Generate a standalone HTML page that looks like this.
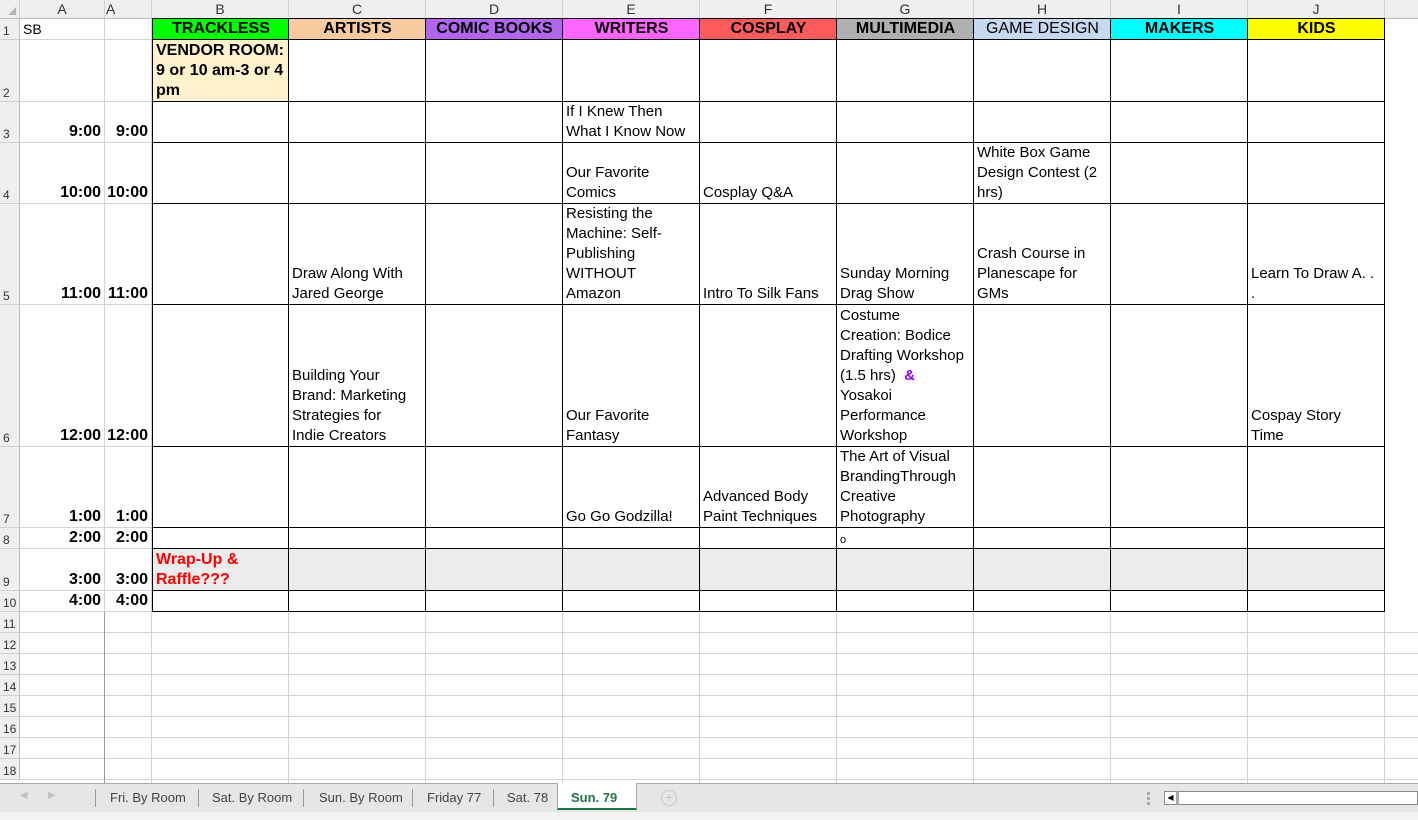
<!DOCTYPE html>
<html><head><meta charset="utf-8"><style>
*{margin:0;padding:0}
body{width:1418px;height:820px;position:relative;overflow:hidden;background:#fff;font-family:"Liberation Sans",Arial,sans-serif;font-size:15px;color:#000}
div{position:absolute;box-sizing:border-box}
.h{top:0;height:19px;background:#efefef;border-right:1px solid #d0d0d0;border-bottom:1px solid #bdbdbd;text-align:center;font-size:14px;line-height:19px;color:#333}
.r{left:0;width:20px;background:#efefef;border-bottom:1px solid #d0d0d0;border-right:1px solid #bdbdbd;font-size:12px;color:#333;display:flex;align-items:flex-end;padding-left:3px;padding-bottom:1px}
.g{border-right:1px solid #d4d4d4;border-bottom:1px solid #d4d4d4}
.c{border-right:1px solid #000;border-bottom:1px solid #000;display:flex;align-items:flex-end;padding:0 2px 0 3px;line-height:20px;overflow:hidden}
.c>span{display:block}
.t{border-right:1px solid #d4d4d4;border-bottom:1px solid #d4d4d4;display:flex;align-items:flex-end;justify-content:flex-end;font-weight:bold;font-size:16px;line-height:20px;padding-right:3px}
.hd{justify-content:center;font-weight:bold;font-size:16px;align-items:center}
.b{font-weight:bold;font-size:16px}
</style></head><body>
<div class="h" style="left:0;width:20px;"><span style="position:absolute;right:3px;bottom:3px;width:0;height:0;border-left:8px solid transparent;border-bottom:8px solid #b5b5b5"></span></div>
<div class="h" style="left:20px;width:85px">A</div>
<div class="h" style="left:105px;width:47px;text-align:left;padding-left:1px">A</div>
<div class="h" style="left:152px;width:137px">B</div>
<div class="h" style="left:289px;width:137px">C</div>
<div class="h" style="left:426px;width:137px">D</div>
<div class="h" style="left:563px;width:137px">E</div>
<div class="h" style="left:700px;width:137px">F</div>
<div class="h" style="left:837px;width:137px">G</div>
<div class="h" style="left:974px;width:137px">H</div>
<div class="h" style="left:1111px;width:137px">I</div>
<div class="h" style="left:1248px;width:137px">J</div>
<div class="h" style="left:1385px;width:33px;border-right:none"></div>

<div class="r" style="top:19px;height:21px">1</div>
<div class="r" style="top:40px;height:62px">2</div>
<div class="r" style="top:102px;height:41px">3</div>
<div class="r" style="top:143px;height:61px">4</div>
<div class="r" style="top:204px;height:101px">5</div>
<div class="r" style="top:305px;height:142px">6</div>
<div class="r" style="top:447px;height:81px">7</div>
<div class="r" style="top:528px;height:21px">8</div>
<div class="r" style="top:549px;height:42px">9</div>
<div class="r" style="top:591px;height:21px">10</div>
<div class="r" style="top:612px;height:21px">11</div>
<div class="r" style="top:633px;height:21px">12</div>
<div class="r" style="top:654px;height:21px">13</div>
<div class="r" style="top:675px;height:21px">14</div>
<div class="r" style="top:696px;height:21px">15</div>
<div class="r" style="top:717px;height:21px">16</div>
<div class="r" style="top:738px;height:21px">17</div>
<div class="r" style="top:759px;height:21px">18</div>

<div style="left:20px;top:612px;width:1398px;height:171px;background:repeating-linear-gradient(to bottom,transparent 0,transparent 20px,#d4d4d4 20px,#d4d4d4 21px)"></div>
<div style="left:104px;top:19px;width:1px;height:764px;background:#9a9a9a"></div>
<div style="left:151px;top:19px;width:1px;height:764px;background:#d4d4d4"></div>
<div style="left:288px;top:612px;width:1px;height:171px;background:#d4d4d4"></div>
<div style="left:425px;top:612px;width:1px;height:171px;background:#d4d4d4"></div>
<div style="left:562px;top:612px;width:1px;height:171px;background:#d4d4d4"></div>
<div style="left:699px;top:612px;width:1px;height:171px;background:#d4d4d4"></div>
<div style="left:836px;top:612px;width:1px;height:171px;background:#d4d4d4"></div>
<div style="left:973px;top:612px;width:1px;height:171px;background:#d4d4d4"></div>
<div style="left:1110px;top:612px;width:1px;height:171px;background:#d4d4d4"></div>
<div style="left:1247px;top:612px;width:1px;height:171px;background:#d4d4d4"></div>
<div style="left:1384px;top:19px;width:1px;height:764px;background:#d4d4d4"></div>

<div class="g" style="left:20px;top:19px;width:85px;height:21px;padding-left:3px;line-height:21px;font-size:14px">SB</div>
<div class="g" style="left:105px;top:19px;width:47px;height:21px"></div>
<div class="t" style="left:20px;top:40px;width:85px;height:62px"></div><div class="t" style="left:105px;top:40px;width:47px;height:62px"></div>
<div class="t" style="left:20px;top:102px;width:85px;height:41px">9:00</div><div class="t" style="left:105px;top:102px;width:47px;height:41px">9:00</div>
<div class="t" style="left:20px;top:143px;width:85px;height:61px">10:00</div><div class="t" style="left:105px;top:143px;width:47px;height:61px">10:00</div>
<div class="t" style="left:20px;top:204px;width:85px;height:101px">11:00</div><div class="t" style="left:105px;top:204px;width:47px;height:101px">11:00</div>
<div class="t" style="left:20px;top:305px;width:85px;height:142px">12:00</div><div class="t" style="left:105px;top:305px;width:47px;height:142px">12:00</div>
<div class="t" style="left:20px;top:447px;width:85px;height:81px">1:00</div><div class="t" style="left:105px;top:447px;width:47px;height:81px">1:00</div>
<div class="t" style="left:20px;top:528px;width:85px;height:21px">2:00</div><div class="t" style="left:105px;top:528px;width:47px;height:21px">2:00</div>
<div class="t" style="left:20px;top:549px;width:85px;height:42px">3:00</div><div class="t" style="left:105px;top:549px;width:47px;height:42px">3:00</div>
<div class="t" style="left:20px;top:591px;width:85px;height:21px">4:00</div><div class="t" style="left:105px;top:591px;width:47px;height:21px">4:00</div>

<div style="left:152px;top:18px;width:1233px;height:1px;background:#000"></div>
<div style="left:152px;top:18px;width:1px;height:594px;background:#000"></div>

<div class="c hd" style="left:153px;top:19px;width:136px;height:21px;background:#00ff00">TRACKLESS</div>
<div class="c hd" style="left:289px;top:19px;width:137px;height:21px;background:#f8cba0">ARTISTS</div>
<div class="c hd" style="left:426px;top:19px;width:137px;height:21px;background:#b166f2">COMIC BOOKS</div>
<div class="c hd" style="left:563px;top:19px;width:137px;height:21px;background:#ff66ff">WRITERS</div>
<div class="c hd" style="left:700px;top:19px;width:137px;height:21px;background:#ff5b5b">COSPLAY</div>
<div class="c hd" style="left:837px;top:19px;width:137px;height:21px;background:#b0b0b0">MULTIMEDIA</div>
<div class="c hd" style="left:974px;top:19px;width:137px;height:21px;background:#c6d9f1;font-weight:normal">GAME DESIGN</div>
<div class="c hd" style="left:1111px;top:19px;width:137px;height:21px;background:#00ffff">MAKERS</div>
<div class="c hd" style="left:1248px;top:19px;width:137px;height:21px;background:#ffff00">KIDS</div>

<div class="c b" style="left:153px;top:40px;width:136px;height:62px;background:#fff2cc;align-items:flex-start;padding-top:1px"><span>VENDOR ROOM:<br>9 or 10 am-3 or 4<br>pm</span></div>
<div class="c" style="left:289px;top:40px;width:137px;height:62px"></div>
<div class="c" style="left:426px;top:40px;width:137px;height:62px"></div>
<div class="c" style="left:563px;top:40px;width:137px;height:62px"></div>
<div class="c" style="left:700px;top:40px;width:137px;height:62px"></div>
<div class="c" style="left:837px;top:40px;width:137px;height:62px"></div>
<div class="c" style="left:974px;top:40px;width:137px;height:62px"></div>
<div class="c" style="left:1111px;top:40px;width:137px;height:62px"></div>
<div class="c" style="left:1248px;top:40px;width:137px;height:62px"></div>

<div class="c" style="left:153px;top:102px;width:136px;height:41px"></div>
<div class="c" style="left:289px;top:102px;width:137px;height:41px"></div>
<div class="c" style="left:426px;top:102px;width:137px;height:41px"></div>
<div class="c" style="left:563px;top:102px;width:137px;height:41px"><span>If I Knew Then<br>What I Know Now</span></div>
<div class="c" style="left:700px;top:102px;width:137px;height:41px"></div>
<div class="c" style="left:837px;top:102px;width:137px;height:41px"></div>
<div class="c" style="left:974px;top:102px;width:137px;height:41px"></div>
<div class="c" style="left:1111px;top:102px;width:137px;height:41px"></div>
<div class="c" style="left:1248px;top:102px;width:137px;height:41px"></div>

<div class="c" style="left:153px;top:143px;width:136px;height:61px"></div>
<div class="c" style="left:289px;top:143px;width:137px;height:61px"></div>
<div class="c" style="left:426px;top:143px;width:137px;height:61px"></div>
<div class="c" style="left:563px;top:143px;width:137px;height:61px"><span>Our Favorite<br>Comics</span></div>
<div class="c" style="left:700px;top:143px;width:137px;height:61px"><span>Cosplay Q&amp;A</span></div>
<div class="c" style="left:837px;top:143px;width:137px;height:61px"></div>
<div class="c" style="left:974px;top:143px;width:137px;height:61px"><span>White Box Game<br>Design Contest (2<br>hrs)</span></div>
<div class="c" style="left:1111px;top:143px;width:137px;height:61px"></div>
<div class="c" style="left:1248px;top:143px;width:137px;height:61px"></div>

<div class="c" style="left:153px;top:204px;width:136px;height:101px"></div>
<div class="c" style="left:289px;top:204px;width:137px;height:101px"><span>Draw Along With<br>Jared George</span></div>
<div class="c" style="left:426px;top:204px;width:137px;height:101px"></div>
<div class="c" style="left:563px;top:204px;width:137px;height:101px"><span>Resisting the<br>Machine: Self-<br>Publishing<br>WITHOUT<br>Amazon</span></div>
<div class="c" style="left:700px;top:204px;width:137px;height:101px"><span>Intro To Silk Fans</span></div>
<div class="c" style="left:837px;top:204px;width:137px;height:101px"><span>Sunday Morning<br>Drag Show</span></div>
<div class="c" style="left:974px;top:204px;width:137px;height:101px"><span>Crash Course in<br>Planescape for<br>GMs</span></div>
<div class="c" style="left:1111px;top:204px;width:137px;height:101px"></div>
<div class="c" style="left:1248px;top:204px;width:137px;height:101px"><span>Learn To Draw A. .<br>.</span></div>

<div class="c" style="left:153px;top:305px;width:136px;height:142px"></div>
<div class="c" style="left:289px;top:305px;width:137px;height:142px"><span>Building Your<br>Brand: Marketing<br>Strategies for<br>Indie Creators</span></div>
<div class="c" style="left:426px;top:305px;width:137px;height:142px"></div>
<div class="c" style="left:563px;top:305px;width:137px;height:142px"><span>Our Favorite<br>Fantasy</span></div>
<div class="c" style="left:700px;top:305px;width:137px;height:142px"></div>
<div class="c" style="left:837px;top:305px;width:137px;height:142px;white-space:nowrap"><span>Costume<br>Creation: Bodice<br>Drafting Workshop<br>(1.5 hrs)&nbsp; <b style="color:#9900ff">&amp;</b><br>Yosakoi<br>Performance<br>Workshop</span></div>
<div class="c" style="left:974px;top:305px;width:137px;height:142px"></div>
<div class="c" style="left:1111px;top:305px;width:137px;height:142px"></div>
<div class="c" style="left:1248px;top:305px;width:137px;height:142px"><span>Cospay Story<br>Time</span></div>

<div class="c" style="left:153px;top:447px;width:136px;height:81px"></div>
<div class="c" style="left:289px;top:447px;width:137px;height:81px"></div>
<div class="c" style="left:426px;top:447px;width:137px;height:81px"></div>
<div class="c" style="left:563px;top:447px;width:137px;height:81px"><span>Go Go Godzilla!</span></div>
<div class="c" style="left:700px;top:447px;width:137px;height:81px"><span>Advanced Body<br>Paint Techniques</span></div>
<div class="c" style="left:837px;top:447px;width:137px;height:81px"><span>The Art of Visual<br>BrandingThrough<br>Creative<br>Photography</span></div>
<div class="c" style="left:974px;top:447px;width:137px;height:81px"></div>
<div class="c" style="left:1111px;top:447px;width:137px;height:81px"></div>
<div class="c" style="left:1248px;top:447px;width:137px;height:81px"></div>

<div class="c" style="left:153px;top:528px;width:136px;height:21px"></div>
<div class="c" style="left:289px;top:528px;width:137px;height:21px"></div>
<div class="c" style="left:426px;top:528px;width:137px;height:21px"></div>
<div class="c" style="left:563px;top:528px;width:137px;height:21px"></div>
<div class="c" style="left:700px;top:528px;width:137px;height:21px"></div>
<div class="c" style="left:837px;top:528px;width:137px;height:21px;font-size:11px;line-height:16px"><span>o</span></div>
<div class="c" style="left:974px;top:528px;width:137px;height:21px"></div>
<div class="c" style="left:1111px;top:528px;width:137px;height:21px"></div>
<div class="c" style="left:1248px;top:528px;width:137px;height:21px"></div>

<div class="c b" style="left:153px;top:549px;width:136px;height:42px;background:#ededed;color:#ff0000"><span>Wrap-Up &amp;<br>Raffle???</span></div>
<div class="c" style="left:289px;top:549px;width:137px;height:42px;background:#ededed"></div>
<div class="c" style="left:426px;top:549px;width:137px;height:42px;background:#ededed"></div>
<div class="c" style="left:563px;top:549px;width:137px;height:42px;background:#ededed"></div>
<div class="c" style="left:700px;top:549px;width:137px;height:42px;background:#ededed"></div>
<div class="c" style="left:837px;top:549px;width:137px;height:42px;background:#ededed"></div>
<div class="c" style="left:974px;top:549px;width:137px;height:42px;background:#ededed"></div>
<div class="c" style="left:1111px;top:549px;width:137px;height:42px;background:#ededed"></div>
<div class="c" style="left:1248px;top:549px;width:137px;height:42px;background:#ededed"></div>

<div class="c" style="left:153px;top:591px;width:136px;height:21px"></div>
<div class="c" style="left:289px;top:591px;width:137px;height:21px"></div>
<div class="c" style="left:426px;top:591px;width:137px;height:21px"></div>
<div class="c" style="left:563px;top:591px;width:137px;height:21px"></div>
<div class="c" style="left:700px;top:591px;width:137px;height:21px"></div>
<div class="c" style="left:837px;top:591px;width:137px;height:21px"></div>
<div class="c" style="left:974px;top:591px;width:137px;height:21px"></div>
<div class="c" style="left:1111px;top:591px;width:137px;height:21px"></div>
<div class="c" style="left:1248px;top:591px;width:137px;height:21px"></div>

<div style="left:0;top:783px;width:1418px;height:29px;background:#e6e6e6;border-top:1px solid #aaa"></div>
<div style="left:0;top:812px;width:1418px;height:8px;background:#f3f3f3"></div>
<div style="left:20px;top:790px;color:#c0c0c0;font-size:10px">&#9664;</div>
<div style="left:48px;top:790px;color:#c0c0c0;font-size:10px">&#9654;</div>
<div style="left:95px;top:789px;width:1px;height:18px;background:#999"></div>
<div style="left:110px;top:790px;font-size:13px;color:#444">Fri. By Room</div>
<div style="left:198px;top:789px;width:1px;height:18px;background:#999"></div>
<div style="left:212px;top:790px;font-size:13px;color:#444">Sat. By Room</div>
<div style="left:303px;top:789px;width:1px;height:18px;background:#999"></div>
<div style="left:319px;top:790px;font-size:13px;color:#444">Sun. By Room</div>
<div style="left:412px;top:789px;width:1px;height:18px;background:#999"></div>
<div style="left:427px;top:790px;font-size:13px;color:#444">Friday 77</div>
<div style="left:493px;top:789px;width:1px;height:18px;background:#999"></div>
<div style="left:507px;top:790px;font-size:13px;color:#444">Sat. 78</div>
<div style="left:557px;top:783px;width:80px;height:27px;background:#fff;border-bottom:2px solid #217346;border-left:1px solid #aaa;border-right:1px solid #aaa"></div>
<div style="left:571px;top:790px;font-size:13px;color:#217346;font-weight:bold">Sun. 79</div>
<div style="left:661px;top:790px;width:16px;height:16px;border:1px solid #c8c8c8;border-radius:50%;color:#c8c8c8;font-size:14px;line-height:13px;text-align:center">+</div>
<div style="left:1147px;top:792px;width:3px;height:13px;background:repeating-linear-gradient(to bottom,#aaa 0,#aaa 3px,transparent 3px,transparent 5px)"></div>
<div style="left:1164px;top:791px;width:254px;height:14px;background:#fff;border:1px solid #888"></div>
<div style="left:1164px;top:791px;width:15px;height:14px;border:1px solid #888;border-right:3px solid #aaa;font-size:8px;line-height:12px;text-align:center">&#9664;</div>
</body></html>
